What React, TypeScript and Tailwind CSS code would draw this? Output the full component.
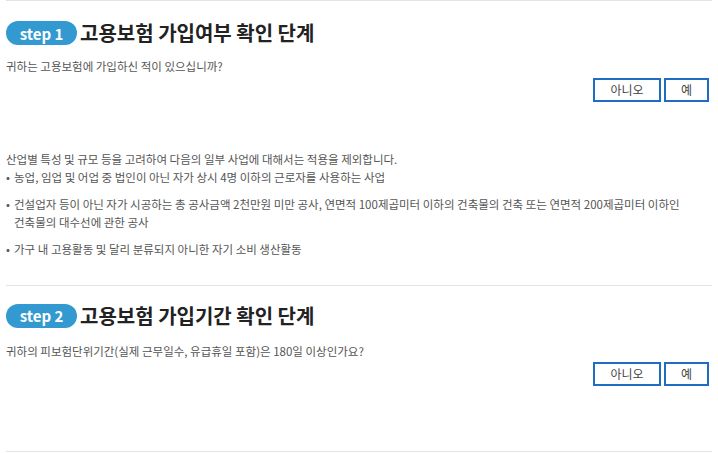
const KR = { fontFamily: '"Noto Sans CJK KR", "Noto Sans", sans-serif' };

function StepHead({ n, title }: { n: number; title: string }) {
  return (
    <div className="flex items-center h-6">
      <span className="flex h-6 w-[71px] items-center justify-center rounded-full bg-[#3399d1] text-[15px] font-semibold leading-none text-white">
        step {n}
      </span>
      <h2 className="ml-[3px] text-[20px] font-bold leading-none text-[#222]">{title}</h2>
    </div>
  );
}

function Answers() {
  return (
    <div className="flex justify-end gap-[3px] pr-[3px]">
      <button className="h-6 w-[68px] border-2 border-[#1f6cc4] bg-white text-[12px] leading-none text-[#444]">아니오</button>
      <button className="h-6 w-[45px] border-2 border-[#1f6cc4] bg-white text-[12px] leading-none text-[#444]">예</button>
    </div>
  );
}

export default function App() {
  return (
    <div className="w-[718px] h-[453px] overflow-hidden bg-white px-[6px] text-[#555]" style={KR}>
      <section className="border-t border-[#e3e3e3] pt-[20px] pb-[27px]">
        <StepHead n={1} title="고용보험 가입여부 확인 단계" />
        <p className="mt-[16px] text-[11.5px] leading-none">귀하는 고용보험에 가입하신 적이 있으십니까?</p>
        <div className="mt-[5px]">
          <Answers />
        </div>
        <div className="mt-[48px] text-[11.5px] leading-[18px]">
          <p>산업별 특성 및 규모 등을 고려하여 다음의 일부 사업에 대해서는 적용을 제외합니다.</p>
          <ul className="flex flex-col gap-[9px]">
            <li className="flex">
              <span className="w-[8px] shrink-0">•</span>
              <span>농업, 임업 및 어업 중 법인이 아닌 자가 상시 4명 이하의 근로자를 사용하는 사업</span>
            </li>
            <li className="flex">
              <span className="w-[8px] shrink-0">•</span>
              <span>
                건설업자 등이 아닌 자가 시공하는 총 공사금액 2천만원 미만 공사, 연면적 100제곱미터 이하의 건축물의 건축 또는 연면적 200제곱미터 이하인
                <br />
                건축물의 대수선에 관한 공사
              </span>
            </li>
            <li className="flex">
              <span className="w-[8px] shrink-0">•</span>
              <span>가구 내 고용활동 및 달리 분류되지 아니한 자기 소비 생산활동</span>
            </li>
          </ul>
        </div>
      </section>
      <section className="border-t border-[#e3e3e3] pt-[18px] pb-[65px]">
        <StepHead n={2} title="고용보험 가입기간 확인 단계" />
        <p className="mt-[18px] text-[11.5px] leading-none">귀하의 피보험단위기간(실제 근무일수, 유급휴일 포함)은 180일 이상인가요?</p>
        <div className="mt-[5px]">
          <Answers />
        </div>
      </section>
      <div className="border-t border-[#e3e3e3]" />
    </div>
  );
}
